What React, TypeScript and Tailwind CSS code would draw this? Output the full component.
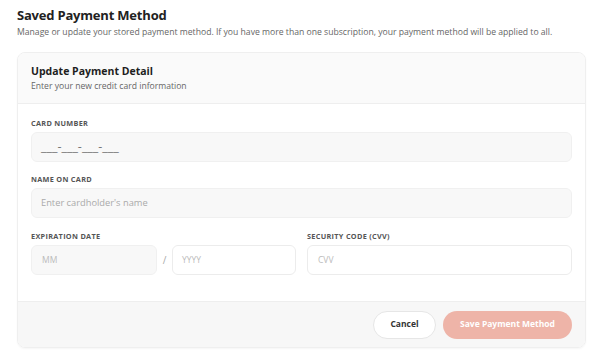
import React from "react";

const font = { fontFamily: '"Open Sans", "Noto Sans", sans-serif' };

function Label({ children }: { children: React.ReactNode }) {
  return (
    <div className="text-[7.3px] font-bold tracking-[0.3px] text-[#555] uppercase leading-[8px] mb-[5px]">
      {children}
    </div>
  );
}

export default function App() {
  return (
    <div className="w-[594px] h-[352px] bg-white overflow-hidden pl-[17px] pr-[8px] pt-[5px]" style={font}>
      <h1 className="text-[13px] font-bold tracking-[-0.2px] text-[#222] leading-[20px]">Saved Payment Method</h1>
      <p className="text-[8.65px] text-[#666] leading-[12px] mt-[1px]">
        Manage or update your stored payment method. If you have more than one subscription, your payment method will be applied to all.
      </p>
      <div className="mt-[14px] border border-[#efefef] rounded-[8px] shadow-[0_1px_2px_rgba(0,0,0,0.04)] overflow-hidden">
        <div className="bg-[#fafafa] border-b border-[#eeeeee] h-[51px] px-[13px] pt-[11px]">
          <div className="text-[10.5px] font-bold text-[#1e1e1e] leading-[14px]">Update Payment Detail</div>
          <div className="text-[8.6px] text-[#666] leading-[12px] mt-[2px]">Enter your new credit card information</div>
        </div>
        <div className="bg-white px-[13px] pt-[15px] pb-[26px]">
          <Label>Card Number</Label>
          <div className="h-[30px] rounded-[6px] bg-[#f8f8f8] border border-[#f0f0f0] flex items-center px-[9px] text-[12.5px] leading-none text-[#777]">
            ___-___-___-___
          </div>
          <div className="mt-[13px]">
            <Label>Name on Card</Label>
            <div className="h-[30px] rounded-[6px] bg-[#f8f8f8] border border-[#f0f0f0] flex items-center px-[9px] text-[9.3px] text-[#aaa]">
              Enter cardholder's name
            </div>
          </div>
          <div className="mt-[14px] grid grid-cols-2 gap-[11px]">
            <div>
              <Label>Expiration Date</Label>
              <div className="flex items-center">
                <div className="flex-1 h-[30px] rounded-[6px] bg-[#f8f8f8] border border-[#f0f0f0] flex items-center px-[10px] text-[8.5px] text-[#bbb]">
                  MM
                </div>
                <div className="w-[15px] text-center text-[10px] text-[#aaa]">/</div>
                <div className="flex-1 h-[30px] rounded-[6px] bg-white border border-[#ececec] flex items-center px-[9px] text-[8.5px] text-[#bbb]">
                  YYYY
                </div>
              </div>
            </div>
            <div>
              <Label>Security Code (CVV)</Label>
              <div className="h-[30px] rounded-[6px] bg-white border border-[#ececec] flex items-center px-[10px] text-[8.5px] text-[#bbb]">
                CVV
              </div>
            </div>
          </div>
        </div>
        <div className="bg-[#f7f7f7] border-t border-[#eeeeee] h-[46px] flex items-center justify-end gap-[7px] px-[13px]">
          <button className="h-[28px] w-[63px] rounded-full bg-white border border-[#e6e6e6] text-[8.5px] font-bold text-[#333]">
            Cancel
          </button>
          <button className="h-[28px] w-[129px] rounded-full bg-[#eeb4a8] text-[8.5px] font-bold text-white">
            Save Payment Method
          </button>
        </div>
      </div>
    </div>
  );
}
